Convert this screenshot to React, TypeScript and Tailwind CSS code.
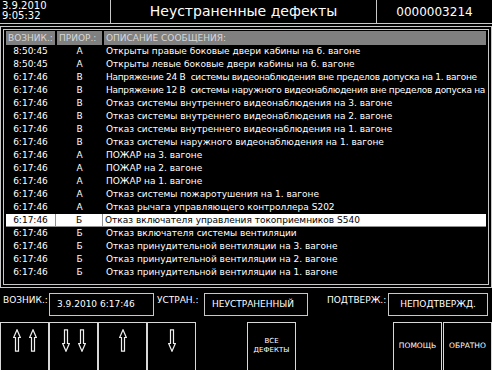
import React from 'react';

type Row = { time: string; prio: string; text: string; tight?: boolean };

const rows: Row[] = [
  { time: '8:50:45', prio: 'А', text: 'Открыты правые боковые двери кабины на 6. вагоне' },
  { time: '8:50:45', prio: 'А', text: 'Открыты левые боковые двери кабины на 6. вагоне' },
  { time: '6:17:46', prio: 'В', text: 'Напряжение 24 В  системы видеонаблюдения вне пределов допуска на 1. вагоне', tight: true },
  { time: '6:17:46', prio: 'В', text: 'Напряжение 12 В  системы наружного видеонаблюдения вне пределов допуска на 1. вагоне', tight: true },
  { time: '6:17:46', prio: 'В', text: 'Отказ системы внутреннего видеонаблюдения на 3. вагоне' },
  { time: '6:17:46', prio: 'В', text: 'Отказ системы внутреннего видеонаблюдения на 2. вагоне' },
  { time: '6:17:46', prio: 'В', text: 'Отказ системы внутреннего видеонаблюдения на 1. вагоне' },
  { time: '6:17:46', prio: 'В', text: 'Отказ системы наружного видеонаблюдения на 1. вагоне' },
  { time: '6:17:46', prio: 'А', text: 'ПОЖАР на 3. вагоне' },
  { time: '6:17:46', prio: 'А', text: 'ПОЖАР на 2. вагоне' },
  { time: '6:17:46', prio: 'А', text: 'ПОЖАР на 1. вагоне' },
  { time: '6:17:46', prio: 'А', text: 'Отказ системы пожаротушения на 1. вагоне' },
  { time: '6:17:46', prio: 'А', text: 'Отказ рычага управляющего контроллера S202' },
  { time: '6:17:46', prio: 'Б', text: 'Отказ включателя управления токоприемников S540' },
  { time: '6:17:46', prio: 'Б', text: 'Отказ включателя системы вентиляции' },
  { time: '6:17:46', prio: 'Б', text: 'Отказ принудительной вентиляции на 3. вагоне' },
  { time: '6:17:46', prio: 'Б', text: 'Отказ принудительной вентиляции на 2. вагоне' },
  { time: '6:17:46', prio: 'Б', text: 'Отказ принудительной вентиляции на 1. вагоне' },
];

const SELECTED = 13;

// outlined arrow like ⇧ / ⇩
const Arrow = ({ down = false }: { down?: boolean }) => (
  <svg width="8" height="23" viewBox="0 0 8 23" className={down ? 'rotate-180' : ''}>
    <path
      d="M4 0.8 L7.3 8.5 L5.5 8.5 L5.5 22.2 L2.5 22.2 L2.5 8.5 L0.7 8.5 Z"
      fill="none"
      stroke="#f0f0f0"
      strokeWidth="1.2"
      strokeLinejoin="miter"
    />
  </svg>
);

export default function App() {
  return (
    <div className="w-[492px] h-[370px] bg-black overflow-hidden text-white font-['DejaVu_Sans',sans-serif]">
      {/* top bar */}
      <div className="flex h-[24px] border-b border-[#c8c8c8]">
        <div className="w-[111px] border-r border-[#c8c8c8] pl-[2px] pt-[1px] text-[10px] leading-[10px]">
          <div>3.9.2010</div>
          <div>9:05:32</div>
        </div>
        <div className="w-[266px] border-r border-[#c8c8c8] flex items-center justify-center text-[14px]">
          Неустраненные дефекты
        </div>
        <div className="flex-1 flex items-center justify-center text-[12px]">0000003214</div>
      </div>

      {/* message list */}
      <div className="mt-[2px] h-[262px] border border-[#c8c8c8] p-[2px]">
        <div className="h-full border border-[#c8c8c8] pl-[2px] pr-[2px] pt-[1px]">
          <div className="flex gap-[2px] h-[14px] text-[9px] leading-[14px] text-[#d8d8d8]">
            <div className="w-[49px] bg-[#808080] pl-[2px] whitespace-nowrap overflow-hidden">ВОЗНИК.:</div>
            <div className="w-[45px] bg-[#808080] pl-[2px] whitespace-nowrap overflow-hidden">ПРИОР.:</div>
            <div className="flex-1 bg-[#808080] pl-[2px] whitespace-nowrap overflow-hidden">ОПИСАНИЕ СООБЩЕНИЯ:</div>
          </div>
          {rows.map((r, i) => {
            const sel = i === SELECTED;
            const cell = sel ? 'bg-white text-black' : '';
            return (
              <div
                key={i}
                className={`flex h-[13px] text-[9px] leading-[13px] ${sel ? 'gap-px bg-[#909090] border-b border-[#909090]' : 'gap-[2px]'}`}
              >
                <div className={`w-[49px] text-center whitespace-nowrap ${cell}`}>{r.time}</div>
                <div className={`${sel ? 'w-[46px]' : 'w-[45px]'} text-center ${cell}`}>{r.prio}</div>
                <div className={`flex-1 min-w-0 pl-[2px] whitespace-pre overflow-hidden ${r.tight ? 'tracking-[-0.27px]' : ''} ${cell}`}>
                  {r.text}
                </div>
              </div>
            );
          })}
        </div>
      </div>

      {/* status fields */}
      <div className="mt-[5px] flex items-start h-[23px] text-[9px] leading-[11px]">
        <div className="w-[49px] pl-[3px] pt-[2px] whitespace-nowrap">ВОЗНИК.:</div>
        <div className="w-[105px] h-[23px] border border-[#c8c8c8] flex items-center pl-[7px] whitespace-nowrap">
          3.9.2010 6:17:46
        </div>
        <div className="w-[50px] pl-[3px] pt-[2px] whitespace-nowrap">УСТРАН.:</div>
        <div className="w-[104px] h-[23px] border border-[#c8c8c8] flex items-center pl-[7px] whitespace-nowrap">
          НЕУСТРАНЕННЫЙ
        </div>
        <div className="w-[80px] pl-[19px] pt-[2px] whitespace-nowrap">ПОДТВЕРЖ.:</div>
        <div className="w-[100px] h-[23px] border border-[#c8c8c8] flex items-center justify-center whitespace-nowrap">
          НЕПОДТВЕРЖД.
        </div>
      </div>

      {/* buttons */}
      <div className="mt-[6px] flex h-[50px]">
        <div className="w-[49px] border border-[#d8d8d8] flex justify-center gap-[8px] pt-[6px]">
          <Arrow />
          <Arrow />
        </div>
        <div className="w-[49px] border border-[#d8d8d8] flex justify-center gap-[8px] pt-[6px]">
          <Arrow down />
          <Arrow down />
        </div>
        <div className="w-[49px] border border-[#d8d8d8] flex justify-center pt-[6px]">
          <Arrow />
        </div>
        <div className="w-[49px] border border-[#d8d8d8] flex justify-center pt-[6px]">
          <Arrow down />
        </div>
        <div className="ml-[51px] w-[49px] border border-[#d8d8d8] flex flex-col items-center justify-center pb-[2px] text-[7px] leading-[9px]">
          <div>ВСЕ</div>
          <div>ДЕФЕКТЫ</div>
        </div>
        <div className="ml-auto w-[49px] border border-[#d8d8d8] flex items-center justify-center pb-[2px] text-[7.5px]">
          ПОМОЩЬ
        </div>
        <div className="ml-px w-[49px] border border-[#d8d8d8] flex items-center justify-center pb-[2px] text-[7.5px]">
          ОБРАТНО
        </div>
      </div>
    </div>
  );
}
